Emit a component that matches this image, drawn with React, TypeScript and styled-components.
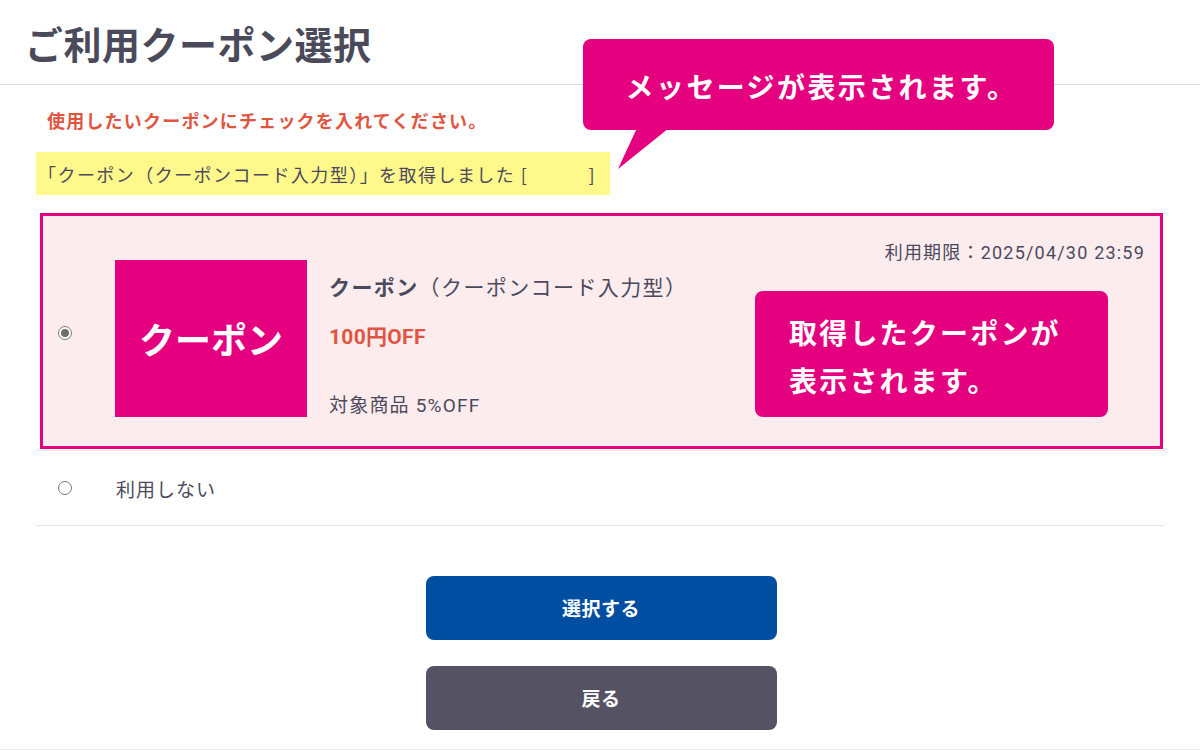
import React from "react";
import styled, { createGlobalStyle } from "styled-components";

const MAGENTA = "#e5007f";
const TEXT = "#4b4a5c";
const RED = "#e0553f";

const GlobalStyle = createGlobalStyle`
  body {
    margin: 0;
    background: #fff;
    font-family: Roboto, "Noto Sans CJK JP", sans-serif;
    color: ${TEXT};
  }
`;

const Page = styled.div`
  position: relative;
  width: 1200px;
  height: 751px;
  overflow: hidden;
`;

const Header = styled.header`
  height: 84px;
  display: flex;
  align-items: center;
  padding-left: 25px;
  border-bottom: 1px solid #dcdcdc;
`;

const Title = styled.h1`
  margin: 0;
  font-family: "Noto Sans CJK JP", sans-serif;
  font-size: 38px;
  font-weight: 700;
  color: #4a4a5a;
  letter-spacing: 0.5px;
`;

const Content = styled.main`
  padding: 0 35px;
`;

const Notice = styled.p`
  margin: 22px 0 0 12px;
  font-family: "Noto Sans CJK JP", sans-serif;
  font-size: 18px;
  line-height: 26px;
  font-weight: 700;
  letter-spacing: 1.2px;
  color: ${RED};
`;

const Acquired = styled.div`
  margin: 19px 0 0 1px;
  width: 574px;
  height: 43px;
  display: flex;
  align-items: center;
  padding-left: 2px;
  box-sizing: border-box;
  background: #fff98c;
  font-family: "Noto Sans CJK JP", sans-serif;
  font-size: 18px;
  letter-spacing: 1.45px;
  white-space: pre;
`;

const OptionList = styled.div`
  margin-top: 18px;
`;

const Option = styled.div<{ $selected?: boolean }>`
  border-bottom: 1px solid #e6e6e6;
  padding: ${(p) => (p.$selected ? "0 2px 1px 5px" : "0 0 0 23px")};
  ${(p) =>
    !p.$selected &&
    `
    height: 74px;
    display: flex;
    align-items: center;
  `}
`;

const Radio = styled.span<{ $checked?: boolean }>`
  flex: none;
  width: 14px;
  height: 14px;
  box-sizing: border-box;
  border-radius: 50%;
  border: 1.5px solid #7a7a7a;
  background: #fff;
  display: flex;
  align-items: center;
  justify-content: center;

  &::after {
    content: "";
    width: 8px;
    height: 8px;
    border-radius: 50%;
    background: ${(p) => (p.$checked ? "#6e6e6e" : "transparent")};
  }
`;

const Card = styled.div`
  border: 3px solid ${MAGENTA};
  background: #fdeced;
  padding: 26px 15px 28px 0;
  display: flex;
  flex-direction: column;
`;

const Expiry = styled.div`
  text-align: right;
  font-size: 18px;
  line-height: 22px;
  margin-bottom: -6px;
  letter-spacing: 1.2px;
`;

const CardBody = styled.div`
  display: flex;
  margin-top: 2px;
`;

const RadioCell = styled.div`
  width: 72px;
  padding: 0 0 12px 15px;
  box-sizing: border-box;
  display: flex;
  align-items: center;
`;

const CouponImage = styled.div`
  width: 192px;
  height: 157px;
  background: ${MAGENTA};
  color: #fff;
  display: flex;
  align-items: center;
  justify-content: center;
  padding-bottom: 2px;
  box-sizing: border-box;
  font-family: "Noto Sans CJK JP", sans-serif;
  font-size: 36px;
  font-weight: 700;
`;

const Info = styled.div`
  margin-left: 22px;
  display: flex;
  flex-direction: column;
`;

const CouponName = styled.div`
  margin-top: 14px;
  font-size: 21px;
  line-height: 28px;
  letter-spacing: 1.4px;

  b {
    font-weight: 700;
  }
`;

const Discount = styled.div`
  margin-top: 20px;
  font-size: 21px;
  line-height: 30px;
  font-weight: 700;
  letter-spacing: 0.3px;
  color: ${RED};
`;

const Target = styled.div`
  margin-top: 42px;
  font-size: 19px;
  line-height: 24px;
  letter-spacing: 1.2px;
`;

const OptionLabel = styled.span`
  margin-left: 44px;
  font-family: "Noto Sans CJK JP", sans-serif;
  font-size: 19px;
  letter-spacing: 1px;
`;

const Actions = styled.div`
  margin: 50px auto 0;
  width: 351px;
  display: flex;
  flex-direction: column;
  gap: 26px;
  transform: translateX(1px);
`;

const Button = styled.button<{ $variant: "primary" | "back" }>`
  height: 64px;
  border: none;
  border-radius: 8px;
  padding-bottom: 3px;
  background: ${(p) => (p.$variant === "primary" ? "#004ea2" : "#545263")};
  color: #fff;
  font-family: "Noto Sans CJK JP", sans-serif;
  font-size: 19px;
  font-weight: 700;
  letter-spacing: 0.5px;
`;

const Footer = styled.div`
  margin-top: 19px;
  border-top: 1px solid #ececec;
`;

const Callout = styled.div<{ $left: number; $top: number; $w: number; $h: number }>`
  position: absolute;
  left: ${(p) => p.$left}px;
  top: ${(p) => p.$top}px;
  width: ${(p) => p.$w}px;
  height: ${(p) => p.$h}px;
  box-sizing: border-box;
  background: ${MAGENTA};
  border-radius: 8px;
  color: #fff;
  font-family: "Noto Sans CJK JP", sans-serif;
  font-weight: 700;
`;

const CalloutCenter = styled.div`
  height: 100%;
  display: flex;
  align-items: center;
  justify-content: center;
  padding: 2px 0 0 6px;
  box-sizing: border-box;
  font-size: 28px;
  letter-spacing: 2.4px;
`;

const CalloutLines = styled.div`
  padding: 17px 0 0 34px;
  font-size: 28px;
  line-height: 48px;
  letter-spacing: 2.2px;
`;

const Tail = styled.svg`
  position: absolute;
  left: 30px;
  top: 89px;
`;

export default function App() {
  return (
    <Page>
      <GlobalStyle />
      <Header>
        <Title>ご利用クーポン選択</Title>
      </Header>
      <Content>
        <Notice>使用したいクーポンにチェックを入れてください。</Notice>
        <Acquired>{"「クーポン（クーポンコード入力型）」を取得しました [           ]"}</Acquired>
        <OptionList>
          <Option $selected>
            <Card>
              <Expiry>利用期限：2025/04/30 23:59</Expiry>
              <CardBody>
                <RadioCell>
                  <Radio $checked />
                </RadioCell>
                <CouponImage>クーポン</CouponImage>
                <Info>
                  <CouponName>
                    <b>クーポン</b>（クーポンコード入力型）
                  </CouponName>
                  <Discount>100円OFF</Discount>
                  <Target>対象商品 5%OFF</Target>
                </Info>
              </CardBody>
            </Card>
          </Option>
          <Option>
            <Radio />
            <OptionLabel>利用しない</OptionLabel>
          </Option>
        </OptionList>
        <Actions>
          <Button $variant="primary">選択する</Button>
          <Button $variant="back">戻る</Button>
        </Actions>
      </Content>
      <Footer />

      <Callout $left={583} $top={39} $w={471} $h={91}>
        <CalloutCenter>メッセージが表示されます。</CalloutCenter>
        <Tail width="60" height="42" viewBox="0 0 60 42">
          <polygon points="24,0 56,0 5,41" fill={MAGENTA} />
        </Tail>
      </Callout>
      <Callout $left={755} $top={291} $w={353} $h={126}>
        <CalloutLines>
          取得したクーポンが
          <br />
          表示されます。
        </CalloutLines>
      </Callout>
    </Page>
  );
}
